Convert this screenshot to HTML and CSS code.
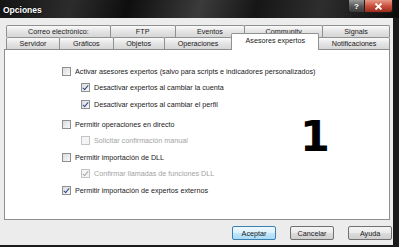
FILE: index.html
```html
<!DOCTYPE html>
<html lang="es">
<head>
  <meta charset="UTF-8" />
  <title>Opciones</title>
  <link rel="stylesheet" href="styles.css">
</head>
<body>
  <div class="window">
    <div class="titlebar">
      <span class="title">Opciones</span>
      <div class="caption-btns">
        <span class="cap-btn help">?</span>
        <span class="cap-btn close">
          <svg width="9" height="7" viewBox="0 0 9 7"><path d="M1.5 0.5 L7.5 6.5 M7.5 0.5 L1.5 6.5" stroke="#fff" stroke-width="1.8"/></svg>
        </span>
      </div>
    </div>

    <div class="frame">
      <div class="tabs">
        <div class="tab-row">
          <span class="tab" style="width:105px">Correo electrónico:</span>
          <span class="tab" style="width:66px">FTP</span>
          <span class="tab" style="width:71px">Eventos</span>
          <span class="tab" style="width:79px">Community</span>
          <span class="tab" style="width:68px">Signals</span>
        </div>
        <div class="tab-row">
          <span class="tab" style="width:54px">Servidor</span>
          <span class="tab" style="width:55px">Gráficos</span>
          <span class="tab" style="width:52px">Objetos</span>
          <span class="tab" style="width:69px">Operaciones</span>
          <span class="tab active" style="width:88px">Asesores expertos</span>
          <span class="tab" style="width:72px">Notificaciones</span>
        </div>
      </div>

      <div class="panel">
        <div class="options">
          <div class="group">
            <label class="row"><span class="check"></span>Activar asesores expertos (salvo para scripts e indicadores personalizados)</label>
            <label class="row sub"><span class="check checked"></span>Desactivar expertos al cambiar la cuenta</label>
            <label class="row sub"><span class="check checked"></span>Desactivar expertos al cambiar el perfil</label>
          </div>
          <div class="group">
            <label class="row"><span class="check"></span>Permitir operaciones en directo</label>
            <label class="row sub disabled"><span class="check"></span>Solicitar confirmación manual</label>
            <label class="row"><span class="check"></span>Permitir importación de DLL</label>
            <label class="row sub disabled"><span class="check checked"></span>Confirmar llamadas de funciones DLL</label>
            <label class="row"><span class="check checked"></span>Permitir importación de expertos externos</label>
          </div>
        </div>
        <div class="big-number">1</div>
      </div>

      <div class="actions">
        <button class="btn default">Aceptar</button>
        <button class="btn">Cancelar</button>
        <button class="btn">Ayuda</button>
      </div>
    </div>
  </div>
</body>
</html>
```

FILE: styles.css
```css
* {
  margin: 0;
  padding: 0;
  box-sizing: border-box;
}
body {
  width: 399px;
  height: 247px;
  overflow: hidden;
  background: #111;
}
.window {
  width: 399px;
  height: 247px;
  display: flex;
  flex-direction: column;
  background: #1b1b1b;
  font-family: "Liberation Sans", Arial, sans-serif;
  color: #1a1a1a;
}

/* title bar */
.titlebar {
  height: 18px;
  display: flex;
  justify-content: space-between;
  align-items: flex-start;
  background: linear-gradient(105deg, #141414 0%, #2c2c2c 18%, #0e0e0e 32%, #3b3b3b 50%, #161616 64%, #2e2e2e 80%, #0b0b0b 100%);
}
.title {
  color: #fff;
  font-weight: bold;
  font-size: 8.5px;
  padding: 5px 0 0 3px;
  text-shadow: 0 0 2px #000;
}
.caption-btns {
  display: flex;
  margin-right: 6px;
}
.cap-btn {
  height: 13px;
  display: flex;
  align-items: center;
  justify-content: center;
  border: 1px solid #1e1e1e;
  border-top: none;
}
.help {
  width: 17px;
  color: #fff;
  font-size: 8px;
  font-weight: bold;
  background: linear-gradient(#9a9a9a, #5a5a5a 50%, #3a3a3a);
  border-radius: 0 0 0 3px;
}
.close {
  width: 29px;
  margin-left: -1px;
  background: linear-gradient(#e89a88, #c9503d 50%, #9b2a1c);
  border-radius: 0 0 3px 0;
}

/* dialog body */
.frame {
  flex: 1;
  margin: 0 6px 2px 0;
  padding: 7px 3px 0 4px;
  background: #ececec;
  display: flex;
  flex-direction: column;
}
.tabs {
  padding-left: 2px;
}
.tab-row {
  display: flex;
  align-items: flex-start;
  height: 12px;
}
.tab {
  height: 12px;
  margin-left: -1px;
  border: 1px solid #8f9090;
  border-bottom: none;
  border-radius: 2px 2px 0 0;
  background: linear-gradient(#fafafa, #e4e4e4 50%, #d6d6d6);
  font-size: 7.2px;
  display: flex;
  align-items: center;
  justify-content: center;
  white-space: nowrap;
}
.tab:first-child {
  margin-left: 0;
}
.tab.active {
  height: 17px;
  margin-top: -4px;
  padding-bottom: 4px;
  background: #fff;
  position: relative;
  z-index: 1;
}

.panel {
  height: 171px;
  border: 1px solid #8c8e92;
  background: #fff;
  position: relative;
}
.options {
  padding: 13px 0 0 57px;
}
.group + .group {
  margin-top: 3.5px;
}
.row {
  height: 16.5px;
  display: flex;
  align-items: center;
  gap: 4px;
  font-size: 7.2px;
  white-space: nowrap;
}
.row.sub {
  padding-left: 19px;
}
.row.disabled {
  color: #a3a3a3;
}
.check {
  width: 9px;
  height: 9px;
  flex: none;
  border: 1px solid #8e8f8f;
  background: linear-gradient(135deg, #dcdcdc, #f8f8f8);
  position: relative;
}
.check.checked::after {
  content: "";
  position: absolute;
  left: 2px;
  top: 0;
  width: 2px;
  height: 5px;
  border: solid #2c4b8c;
  border-width: 0 1.5px 1.5px 0;
  transform: rotate(40deg);
}
.disabled .check {
  border-color: #c4c4c4;
  background: #f4f4f4;
}
.disabled .check.checked::after {
  border-color: #a9a9a9;
}

/* annotation over the panel */
.big-number {
  position: absolute;
  left: 295px;
  top: 65px;
  font-family: "DejaVu Sans", sans-serif;
  font-weight: bold;
  font-size: 43px;
  line-height: 1;
  color: #000;
}

.actions {
  display: flex;
  justify-content: flex-end;
  gap: 14px;
  margin: 6px -2px 0 0;
}
.btn {
  width: 44px;
  height: 14px;
  border: 1px solid #707070;
  border-radius: 2px;
  background: linear-gradient(#f4f4f4, #eaeaea 50%, #dcdcdc 51%, #cfcfcf);
  font-family: inherit;
  font-size: 7.2px;
  color: #1a1a1a;
}
.btn.default {
  border-color: #3c7fb1;
  background: linear-gradient(#eef8fd, #dcf1fc 50%, #c2e7fb 51%, #a9dbf6);
}
```
